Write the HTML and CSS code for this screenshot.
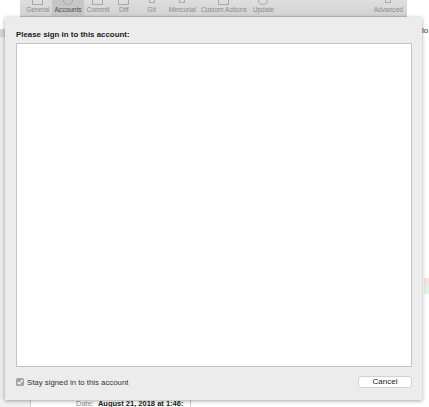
FILE: index.html
```html
<!DOCTYPE html>
<html>
<head>
<meta charset="utf-8">
<link rel="stylesheet" href="styles.css">
</head>
<body>
<div class="page">
  <div class="toolbar">
    <div class="tab t-general"><span class="ico"></span><span class="lbl">General</span></div>
    <div class="tab t-accounts sel"><span class="ico round"></span><span class="lbl">Accounts</span></div>
    <div class="tab t-commit"><span class="ico"></span><span class="lbl">Commit</span></div>
    <div class="tab t-diff"><span class="ico"></span><span class="lbl">Diff</span></div>
    <div class="tab t-git"><span class="ico small"></span><span class="lbl">Git</span></div>
    <div class="tab t-hg"><span class="ico small"></span><span class="lbl">Mercurial</span></div>
    <div class="tab t-custom"><span class="ico"></span><span class="lbl">Custom Actions</span></div>
    <div class="tab t-update"><span class="ico round"></span><span class="lbl">Update</span></div>
    <div class="tab t-adv"><span class="ico small"></span><span class="lbl">Advanced</span></div>
  </div>
  <div class="behind">
    <div class="side-left"></div>
    <div class="middle"></div>
    <div class="side-right"><span class="frag">lo</span><span class="pink"></span><span class="green"></span></div>
  </div>
  <div class="details">
    <div class="d-left"></div>
    <div class="d-mid"><span class="dlabel">Date:</span><span class="dval">August 21, 2018 at 1:46:</span></div>
    <div class="d-right"></div>
  </div>

  <div class="sheet">
    <div class="title">Please sign in to this account:</div>
    <div class="webview"></div>
    <div class="footer">
      <label class="check"><span class="box"><svg width="8" height="8" viewBox="0 0 8 8"><path d="M1.6 4.2 L3.3 5.9 L6.5 2" fill="none" stroke="#fff" stroke-width="1.3"/></svg></span><span>Stay signed in to this account</span></label>
      <button class="cancel">Cancel</button>
    </div>
  </div>
</div>
</body>
</html>
```
FILE: styles.css
```css
html, body {
  margin: 0;
  padding: 0;
  background: #ffffff;
  font-family: "Liberation Sans", Arial, sans-serif;
  overflow: hidden;
}
.page {
  position: relative;
  width: 429px;
  height: 407px;
  overflow: hidden;
}
.toolbar {
  display: flex;
  margin: 0 22px 0 20px;
  height: 17px;
  background: linear-gradient(#dedede, #d2d2d2);
  border-bottom: 1px solid #bdbdbd;
  box-sizing: border-box;
}
.tab {
  display: flex;
  flex-direction: column;
  align-items: center;
  padding: 0 2px;
  height: 16px;
}
.t-general { margin-left: 4px; }
.t-accounts { margin-left: 1px; }
.t-commit { margin-left: 1px; }
.t-diff { margin-left: 5px; }
.t-git { margin-left: 14px; }
.t-hg { margin-left: 9px; }
.t-custom { margin-left: 1px; }
.t-update { margin-left: 2px; }
.t-adv { margin-left: auto; margin-right: 2px; }
.tab.sel {
  background: #c6c6c6;
}
.ico {
  display: block;
  width: 9px;
  height: 5px;
  margin-top: -1px;
  border: 1px solid #a8a8a8;
  border-top: none;
  border-radius: 0 0 1px 1px;
}
.ico.round { border-radius: 0 0 5px 5px; width: 8px; }
.ico.small { width: 4px; height: 3px; }
.lbl {
  margin-top: auto;
  margin-bottom: 3px;
  font-size: 6.6px;
  color: #8a8a8a;
  white-space: nowrap;
}
.tab.sel .lbl { color: #4a4a4a; }
.behind {
  display: flex;
  height: 382px;
}
.side-left {
  width: 5px;
  background: linear-gradient(#ffffff 0, #ffffff 12px, #d4d4d4 12px, #d4d4d4 20px, #ebebeb 20px);
}
.middle { flex: 1; }
.side-right {
  width: 7px;
  display: flex;
  flex-direction: column;
  align-items: flex-end;
}
.frag {
  margin-top: 9px;
  font-size: 8px;
  color: #333;
  width: 7px;
  overflow: hidden;
  white-space: nowrap;
}
.pink { margin-top: 243px; width: 5px; height: 8px; background: #f5e3e3; }
.green { width: 5px; height: 8px; background: #e3f2e3; }
.details {
  display: flex;
  height: 8px;
}
.d-left { width: 30px; background: #f1f1f1; border-right: 1px solid #d0d0d0; }
.d-mid {
  width: 159px;
  border-right: 1px solid #d0d0d0;
  font-size: 7.5px;
  line-height: 8px;
  padding-top: 1px;
  white-space: nowrap;
  overflow: hidden;
}
.dlabel { margin-left: 45px; color: #8c8c8c; }
.dval { margin-left: 4px; color: #222; font-weight: bold; }
.sheet {
  position: absolute;
  left: 5px;
  top: 17px;
  width: 417px;
  height: 383px;
  background: #ececec;
  box-shadow: 0 1px 4px rgba(0,0,0,0.35);
  box-sizing: border-box;
  padding: 0 10px 0 11px;
  display: flex;
  flex-direction: column;
}
.title {
  font-weight: bold;
  font-size: 7.9px;
  line-height: 8px;
  color: #222;
  padding-top: 13.5px;
  height: 12.5px;
  white-space: nowrap;
}
.webview {
  height: 324px;
  background: #fff;
  border: 1px solid #c4c4c4;
  box-sizing: border-box;
}
.footer {
  display: flex;
  align-items: center;
  justify-content: space-between;
  margin-top: 9px;
}
.check {
  display: flex;
  align-items: center;
  font-size: 7.8px;
  color: #333;
  gap: 3px;
}
.box {
  width: 8px;
  height: 8px;
  border-radius: 1.5px;
  background: #a3a3a3;
  display: flex;
}
.cancel {
  width: 54px;
  height: 12px;
  padding: 0;
  background: #fff;
  border: 1px solid #d2d2d2;
  border-radius: 3px;
  font-family: "Liberation Sans", Arial, sans-serif;
  font-size: 8px;
  color: #222;
  line-height: 10px;
}
```
